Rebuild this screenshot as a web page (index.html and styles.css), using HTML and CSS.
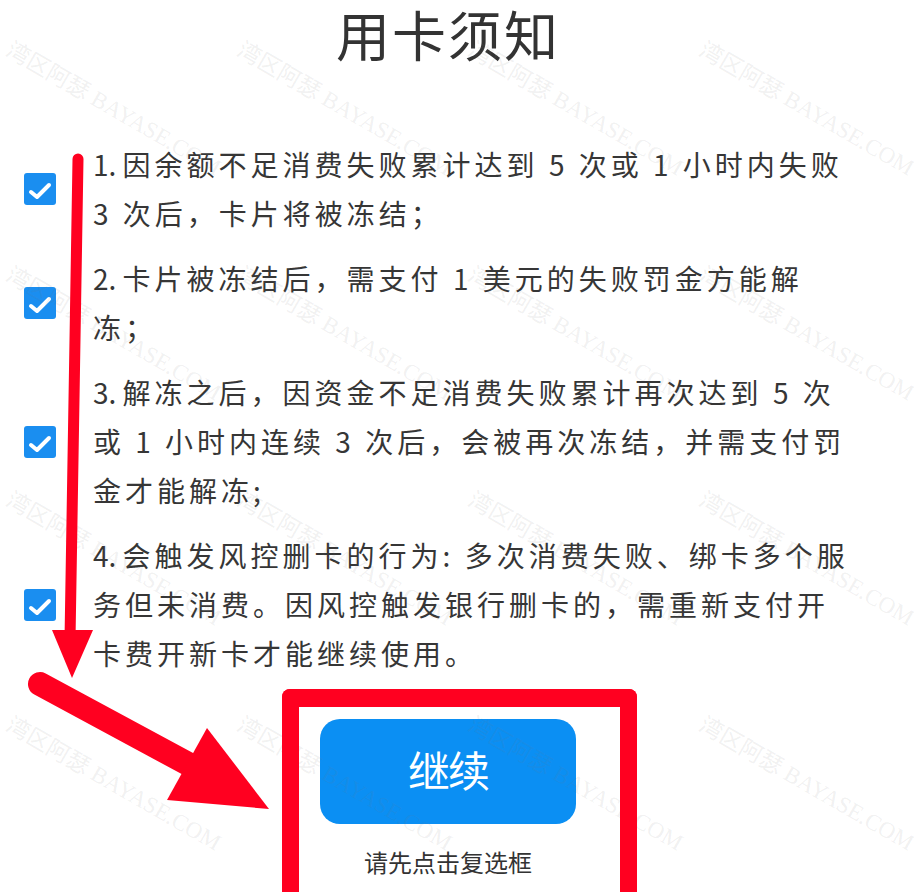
FILE: index.html
```html
<!DOCTYPE html>
<html lang="zh-CN">
<head>
<meta charset="utf-8">
<title>用卡须知</title>
<link rel="stylesheet" href="styles.css">
</head>
<body>
<div class="page">
  <h1 class="title">用卡须知</h1>
  <ul class="rules">
    <li class="rule">
      <span class="check"><svg viewBox="0 0 32 32" width="32" height="32"><rect width="32" height="32" rx="3" fill="#1a8ef0"/><path d="M7 19 L13 24 L25 12" fill="none" stroke="#fff" stroke-width="4" stroke-linecap="round" stroke-linejoin="round"/></svg></span>
      <p class="rule-text"><span class="idx">1. </span>因余额不足消费失败累计达到 5 次或 1 小时内失败<br>3 次后，卡片将被冻结；</p>
    </li>
    <li class="rule">
      <span class="check"><svg viewBox="0 0 32 32" width="32" height="32"><rect width="32" height="32" rx="3" fill="#1a8ef0"/><path d="M7 19 L13 24 L25 12" fill="none" stroke="#fff" stroke-width="4" stroke-linecap="round" stroke-linejoin="round"/></svg></span>
      <p class="rule-text"><span class="idx">2. </span>卡片被冻结后，需支付 1 美元的失败罚金方能解<br>冻；</p>
    </li>
    <li class="rule">
      <span class="check"><svg viewBox="0 0 32 32" width="32" height="32"><rect width="32" height="32" rx="3" fill="#1a8ef0"/><path d="M7 19 L13 24 L25 12" fill="none" stroke="#fff" stroke-width="4" stroke-linecap="round" stroke-linejoin="round"/></svg></span>
      <p class="rule-text"><span class="idx">3. </span>解冻之后，因资金不足消费失败累计再次达到 5 次<br>或 1 小时内连续 3 次后，会被再次冻结，并需支付罚<br>金才能解冻;</p>
    </li>
    <li class="rule">
      <span class="check"><svg viewBox="0 0 32 32" width="32" height="32"><rect width="32" height="32" rx="3" fill="#1a8ef0"/><path d="M7 19 L13 24 L25 12" fill="none" stroke="#fff" stroke-width="4" stroke-linecap="round" stroke-linejoin="round"/></svg></span>
      <p class="rule-text"><span class="idx">4. </span>会触发风控删卡的行为: 多次消费失败、绑卡多个服<br>务但未消费。因风控触发银行删卡的，需重新支付开<br>卡费开新卡才能继续使用。</p>
    </li>
  </ul>
  <div class="action">
    <button class="btn" type="button">继续</button>
    <p class="hint">请先点击复选框</p>
  </div>

  <div class="watermarks" aria-hidden="true">
    <span class="wm wm-r1 wm-c1">湾区阿瑟 BAYASE.COM</span>
    <span class="wm wm-r1 wm-c2">湾区阿瑟 BAYASE.COM</span>
    <span class="wm wm-r1 wm-c3">湾区阿瑟 BAYASE.COM</span>
    <span class="wm wm-r1 wm-c4">湾区阿瑟 BAYASE.COM</span>
    <span class="wm wm-r2 wm-c1">湾区阿瑟 BAYASE.COM</span>
    <span class="wm wm-r2 wm-c2">湾区阿瑟 BAYASE.COM</span>
    <span class="wm wm-r2 wm-c3">湾区阿瑟 BAYASE.COM</span>
    <span class="wm wm-r2 wm-c4">湾区阿瑟 BAYASE.COM</span>
    <span class="wm wm-r3 wm-c1">湾区阿瑟 BAYASE.COM</span>
    <span class="wm wm-r3 wm-c2">湾区阿瑟 BAYASE.COM</span>
    <span class="wm wm-r3 wm-c3">湾区阿瑟 BAYASE.COM</span>
    <span class="wm wm-r3 wm-c4">湾区阿瑟 BAYASE.COM</span>
    <span class="wm wm-r4 wm-c1">湾区阿瑟 BAYASE.COM</span>
    <span class="wm wm-r4 wm-c2">湾区阿瑟 BAYASE.COM</span>
    <span class="wm wm-r4 wm-c3">湾区阿瑟 BAYASE.COM</span>
    <span class="wm wm-r4 wm-c4">湾区阿瑟 BAYASE.COM</span>
  </div>

  <div class="redbox"></div>
  <svg class="arrows" width="914" height="892" viewBox="0 0 914 892" aria-hidden="true">
    <line x1="78" y1="159" x2="70" y2="640" stroke="#ff0020" stroke-width="11" stroke-linecap="round"/>
    <polygon points="52,630 93,630 72,678" fill="#ff0020"/>
    <line x1="40" y1="684" x2="192" y2="766" stroke="#ff0020" stroke-width="24" stroke-linecap="round"/>
    <polygon points="207,728 167,800 269,809" fill="#ff0020"/>
  </svg>
</div>
</body>
</html>
```

FILE: styles.css
```css
html, body {
  margin: 0;
  padding: 0;
  height: 892px;
  overflow: hidden;
  background: #fff;
}

.page {
  position: relative;
  width: 914px;
  height: 892px;
  overflow: hidden;
  font-family: "Noto Sans CJK SC", sans-serif;
  color: #333;
}

.title {
  width: 896px;
  margin: 0;
  font-size: 54px;
  line-height: 68px;
  font-weight: 400;
  letter-spacing: 2px;
  text-align: center;
  color: #333;
}

.rules {
  list-style: none;
  margin: 0;
  padding: 72px 0 0 24px;
  display: flex;
  flex-direction: column;
  gap: 16px;
}

.rule {
  display: flex;
  align-items: center;
  gap: 37px;
}

.check {
  flex: 0 0 32px;
  width: 32px;
  height: 32px;
  display: block;
}

.check svg {
  display: block;
}

.rule-text {
  margin: 0;
  font-size: 28px;
  line-height: 49px;
  letter-spacing: 4px;
  white-space: nowrap;
  color: #363636;
}

.idx {
  letter-spacing: 0;
}

.action {
  width: 896px;
  display: flex;
  flex-direction: column;
  align-items: center;
  margin-top: 41px;
}

.btn {
  width: 256px;
  height: 105px;
  border: 0;
  border-radius: 20px;
  background: #0b8ff3;
  color: #fff;
  font-family: "Noto Sans CJK SC", sans-serif;
  font-size: 42px;
  line-height: 100px;
  padding: 0 0 5px;
  letter-spacing: -2px;
}

.hint {
  margin: 21px 0 0;
  font-size: 24px;
  line-height: 34px;
  color: #333;
}

.watermarks {
  position: absolute;
  inset: 0;
  pointer-events: none;
}

.wm {
  position: absolute;
  font-family: "Liberation Serif", "Noto Sans CJK SC", serif;
  font-size: 23px;
  line-height: 1;
  color: rgba(120, 120, 120, 0.11);
  white-space: nowrap;
  transform-origin: 0 0;
  transform: rotate(30deg);
}

.wm-c1 { left: 14px; }
.wm-c2 { left: 245px; }
.wm-c3 { left: 476px; }
.wm-c4 { left: 707px; }
.wm-r1 { top: 38px; }
.wm-r2 { top: 263px; }
.wm-r3 { top: 488px; }
.wm-r4 { top: 713px; }

.redbox {
  position: absolute;
  left: 282px;
  top: 689px;
  width: 321px;
  height: 186px;
  border: 17px solid #ff0020;
  border-top-width: 18px;
  border-bottom: 0;
  border-radius: 8px 8px 0 0;
}

.arrows {
  position: absolute;
  left: 0;
  top: 0;
  pointer-events: none;
}
```
